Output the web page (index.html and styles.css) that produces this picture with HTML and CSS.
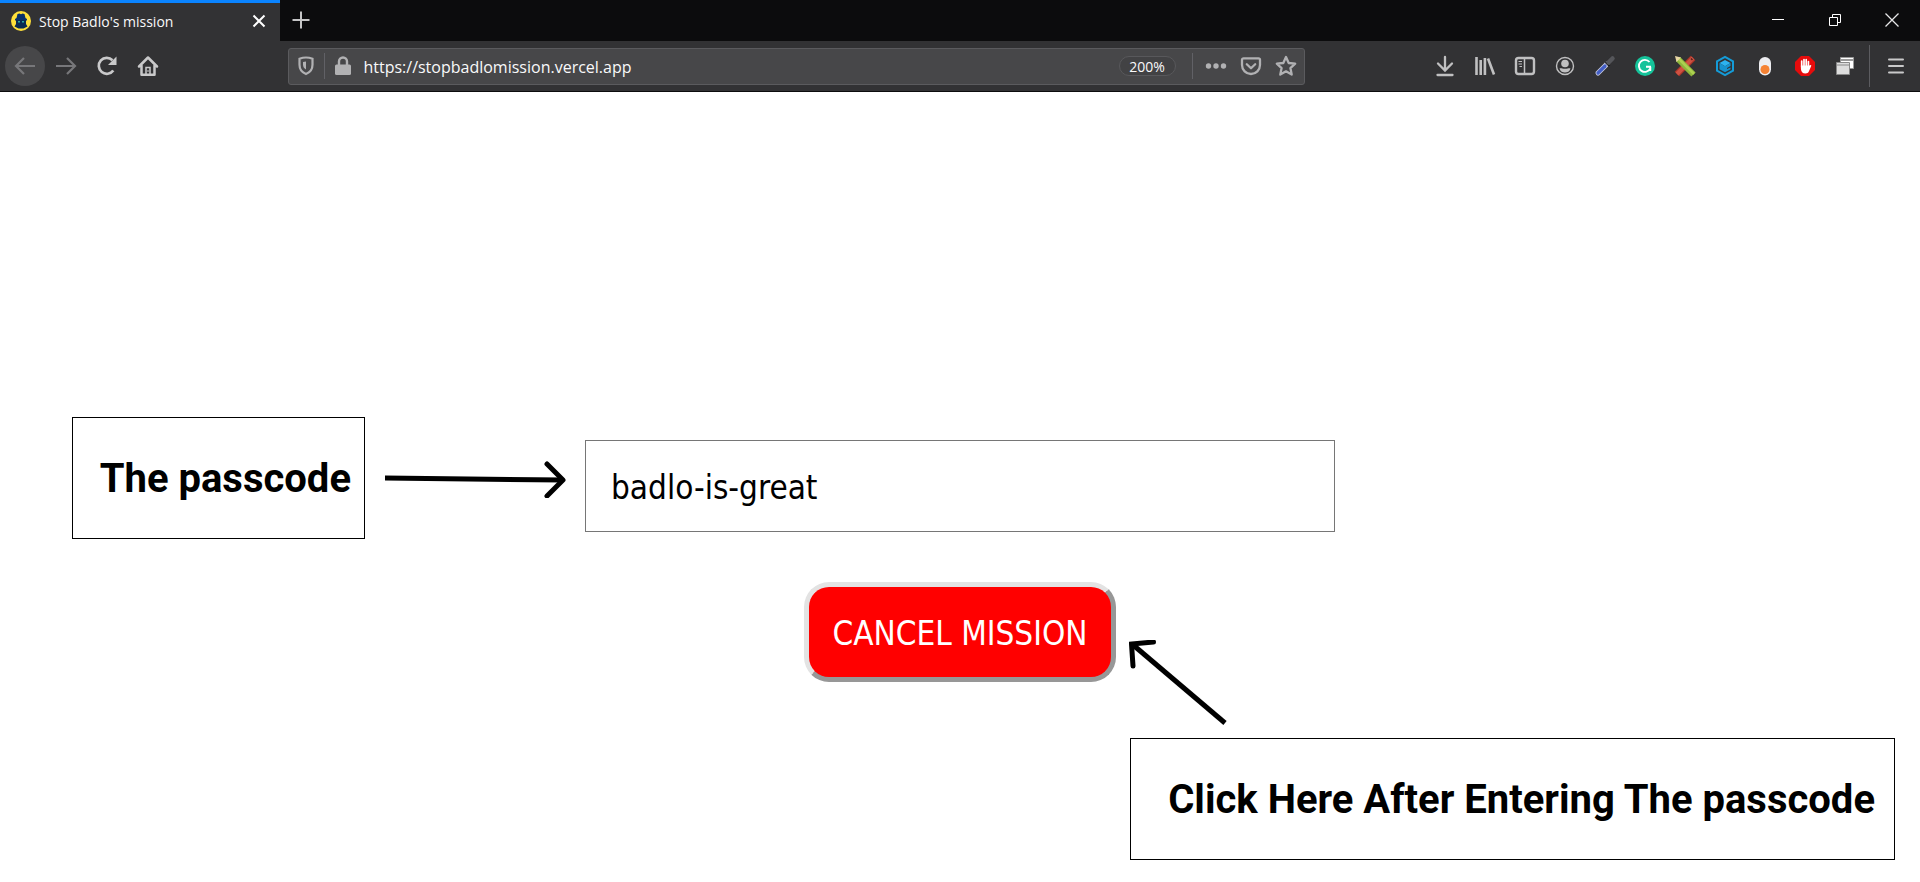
FILE: index.html
```html
<!DOCTYPE html>
<html lang="en">
<head>
<meta charset="utf-8">
<title>Stop Badlo's mission</title>
<link rel="stylesheet" href="styles.css">
</head>
<body>
<header class="browser">
  <div class="tabbar">
    <div class="tab">
      <svg class="favicon" viewBox="0 0 20 20" aria-hidden="true"><circle cx="10" cy="10" r="10" fill="#ffe03a"/><path d="M6.500 3 8.500 2.500 10 3.200 11.500 2.500 13.500 3 14.500 7 16 8v1.500H4V8l1.500-1z" fill="#08306b"/><path d="M5 9h10v4l1.500 2.500-2 1-2 1h-5l-4-2L5 13z" fill="#0b2a52"/><path d="M7 10h2v1.500H7zM11 10h2v1.500h-2z" fill="#2fa7a0"/></svg>
      <span class="tab-title">Stop Badlo's mission</span>
      <button class="tab-close" aria-label="Close tab"><svg viewBox="0 0 24 24"><path d="M6.500 6.500l11 11M17.500 6.500l-11 11" stroke="#fff" stroke-width="2"/></svg></button>
    </div>
    <button class="new-tab" aria-label="New tab"><svg viewBox="0 0 24 24"><path d="M12 3.500v17M3.500 12h17" stroke="#c6c6c6" stroke-width="2"/></svg></button>
    <div class="window-controls">
      <button aria-label="Minimize"><svg viewBox="0 0 24 24"><path d="M6 11.500h12" stroke="#fff"/></svg></button>
      <button aria-label="Restore"><svg viewBox="0 0 24 24"><path d="M6.500 9.500h8v8h-8zM9.500 9V6.500h8v8H15" stroke="#fff"/></svg></button>
      <button aria-label="Close window"><svg viewBox="0 0 24 24"><path d="M5.500 5.500l13 13M18.500 5.500l-13 13" stroke="#e8e8e8" stroke-width="1.300"/></svg></button>
    </div>
  </div>
  <nav class="toolbar" aria-label="Browser toolbar">
    <div class="nav-buttons">
      <button class="tool back" aria-label="Back"><svg viewBox="0 0 24 24"><path d="M22 12H3.500M11 4l-8 8 8 8" stroke="#77777a" stroke-width="2.200"/></svg></button>
      <button class="tool" aria-label="Forward"><svg viewBox="0 0 24 24"><path d="M2 12h18.500M13 4l8 8-8 8" stroke="#77777a" stroke-width="2.200"/></svg></button>
      <button class="tool" aria-label="Reload"><svg viewBox="0 0 24 24"><path d="M18.300 16.500A8 8 0 1 1 17.500 6.200" stroke="#c9c9ca" stroke-width="2.700"/><path d="M21.500 2.500v8.500H13z" fill="#c9c9ca"/></svg></button>
      <button class="tool" aria-label="Home"><svg viewBox="0 0 24 24"><path d="M3 12.500 12 3.500l9 9M5.500 11.500v9.300h13v-9.300" stroke="#c9c9ca" stroke-width="2.500" stroke-linejoin="round" stroke-linecap="round"/><path d="M10 20.500v-7h4v7" stroke="#c9c9ca" stroke-width="1.500"/><path d="M12 16v2" stroke="#c9c9ca"/></svg></button>
    </div>
    <div class="spacer"></div>
    <div class="urlbar">
      <svg class="icon" viewBox="0 0 24 24"><path d="M12 3.500c2.500 0 4.500.500 6.500 1.300v6c0 4.500-2.500 7.700-6.500 9.200-4-1.500-6.500-4.700-6.500-9.200v-6C7.500 4 9.500 3.500 12 3.500z" stroke="#b1b1b3" stroke-width="2.200"/><path d="M12 7.500v8c-2-1-3-3-3-5V8z" fill="#b1b1b3"/></svg>
      <span class="divider"></span>
      <svg class="icon" viewBox="0 0 24 24"><path d="M8 11V7.500a4 4 0 0 1 8 0V11" stroke="#b1b1b3" stroke-width="2.400"/><rect x="4" y="10.500" width="16" height="10.500" rx="1.500" fill="#b1b1b3"/></svg>
      <input class="url" type="text" aria-label="Address" value="https://stopbadlomission.vercel.app">
      <button class="zoom">200%</button>
      <span class="divider"></span>
      <button class="page-action" aria-label="Page actions"><svg viewBox="0 0 24 24"><g fill="#b1b1b3"><circle cx="4.500" cy="12" r="2.700"/><circle cx="12" cy="12" r="2.700"/><circle cx="19.500" cy="12" r="2.700"/></g></svg></button>
      <button class="page-action" aria-label="Save to Pocket"><svg viewBox="0 0 24 24"><path d="M4.500 4.300h15a1.500 1.500 0 0 1 1.500 1.500V11a9 9 0 0 1-18 0V5.800a1.500 1.500 0 0 1 1.500-1.500z" stroke="#b1b1b3" stroke-width="2.300"/><path d="M7.800 10.200 12 14.300l4.200-4.100" stroke="#b1b1b3" stroke-width="2.300" stroke-linecap="round" stroke-linejoin="round"/></svg></button>
      <button class="page-action" aria-label="Bookmark"><svg viewBox="0 0 24 24"><path d="M12 3l2.700 6 6.500.700-4.800 4.400 1.300 6.500L12 17.300l-5.700 3.300 1.300-6.500-4.800-4.400 6.500-.700z" stroke="#b1b1b3" stroke-width="2.300" stroke-linejoin="round"/></svg></button>
    </div>
    <div class="spacer"></div>
    <div class="extensions">
      <button class="tool" aria-label="Downloads"><svg viewBox="0 0 24 24"><path d="M12 3v13M5 9.500l7 7 7-7M4.500 21h15" stroke="#c0c0c1" stroke-width="2.300" stroke-linecap="round"/></svg></button>
      <button class="tool" aria-label="Library"><svg viewBox="0 0 24 24"><path d="M3.500 3v18M7.700 6v15M11.900 4v17M15 4.500l6 16" stroke="#c0c0c1" stroke-width="2.600"/></svg></button>
      <button class="tool" aria-label="Sidebars"><svg viewBox="0 0 24 24"><rect x="3" y="4" width="18" height="16" rx="2.500" stroke="#c0c0c1" stroke-width="2.400"/><path d="M11.500 4v16" stroke="#c0c0c1" stroke-width="1.500"/><path d="M5.500 7.500H9M5.500 10H9M6.500 12.500H9" stroke="#c0c0c1" stroke-width="1.200"/></svg></button>
      <button class="tool" aria-label="Account"><svg viewBox="0 0 24 24"><circle cx="12" cy="12" r="8.500" stroke="#c0c0c1" stroke-width="1.400"/><circle cx="12" cy="9.500" r="3.800" fill="#c0c0c1"/><path d="M6.500 14.500c1.500-.700 2.500.300 5.500.300s4-1 5.500-.300c-1 3-3 4-5.500 4s-4.500-1-5.500-4z" fill="#c0c0c1"/></svg></button>
      <button class="tool" aria-label="Color picker"><svg viewBox="0 0 24 24"><path d="M5 19 14 10" stroke="#c9cce0" stroke-width="5" stroke-linecap="round"/><path d="M5 19l7-7" stroke="#425dc4" stroke-width="3.200" stroke-linecap="round"/><path d="M12.500 8l4 4" stroke="#17171a" stroke-width="2"/><path d="M15.500 8.500l4-4" stroke="#55565a" stroke-width="4.500" stroke-linecap="round"/></svg></button>
      <button class="tool" aria-label="Grammarly"><svg viewBox="0 0 24 24"><circle cx="12" cy="12" r="10" fill="#15c39a"/><path d="M16.500 8A6 6 0 1 0 17.300 14.500M18 12.800h-5M17.300 12.800v4.200" stroke="#fff" stroke-width="1.900"/></svg></button>
      <button class="tool" aria-label="Editor tools"><svg viewBox="0 0 24 24"><path d="M4 20l16-16" stroke="#a83427" stroke-width="6.500"/><path d="M4 20l16-16" stroke="#cf5142" stroke-width="4"/><path d="M18 4.500l1.500 1.500" stroke="#55201a" stroke-width="1.500"/><path d="M5 5l15.500 15.500" stroke="#8db63b" stroke-width="6"/><path d="M5.500 4.500L21 20" stroke="#add051" stroke-width="2.500"/><path d="M2 2l6 1.500L3.500 8z" fill="#e9d7a4"/></svg></button>
      <button class="tool" aria-label="Cube"><svg viewBox="0 0 24 24"><path d="M12 2.800l8 4.600v9.200l-8 4.600-8-4.600V7.400z" stroke="#149bd7" stroke-width="2"/><path d="M12 6l5.500 3.100L12 12.200 6.500 9.100z" fill="#2cb3ef"/><path d="M6.500 9.100l5.500 3.100 5.500-3.100v3L14 14v1l3.500-1.500v1.700L12 18.300l-5.500-3.100z" fill="#1593cf"/></svg></button>
      <button class="tool" aria-label="Toggle"><svg viewBox="0 0 24 24"><rect x="6" y="3" width="12" height="18.500" rx="6" fill="#ededf0"/><circle cx="12" cy="15.500" r="4.500" fill="#f58233"/></svg></button>
      <button class="tool" aria-label="Ad blocker"><svg viewBox="0 0 24 24"><path d="M8 2h8l6 6v8l-6 6H8l-6-6V8z" fill="#e60c0c"/><path d="M8.700 13V7M11 12V5.500M13.200 12V5.500M15.400 13V7.500" stroke="#fff" stroke-width="1.700" stroke-linecap="round"/><path d="M7.900 11.500h8.300l1.500-.500c1 0 .500 1 .200 1.800l-2.200 5c-.500 1-1.500 1.700-3.200 1.700-3 0-4.600-2-4.600-5z" fill="#fff"/></svg></button>
      <button class="tool" aria-label="Windows"><svg viewBox="0 0 24 24"><path d="M7.500 3.500h13v11h-13z" fill="#fff" stroke="#999"/><path d="M8 6h12" stroke="#777" stroke-width="1.500"/><path d="M3.500 8.500h13v12h-13z" fill="#ddd" stroke="#888"/><path d="M4 11h12" stroke="#888"/></svg></button>
      <span class="toolbar-divider"></span>
      <button class="tool" aria-label="Open menu"><svg viewBox="0 0 24 24"><path d="M5 5.500h14M5 12h14M5 18.500h14" stroke="#c9c9ca" stroke-width="2" stroke-linecap="round"/></svg></button>
    </div>
  </nav>
</header>
<main class="page">
  <div class="entry-row">
    <div class="hint">
      <p class="callout">The passcode</p>
      <svg class="arrow-right" viewBox="0 0 181 40" aria-hidden="true"><path d="M0 20l178 2" stroke="#000" stroke-width="5"/><path d="M162 6l16 16-16 16" stroke="#000" stroke-width="5" stroke-linecap="round" stroke-linejoin="round"/></svg>
    </div>
    <input class="passcode" type="text" aria-label="Passcode" value="badlo-is-great">
  </div>
  <div class="action-row">
    <button class="cancel">CANCEL MISSION</button>
    <svg class="arrow-up" viewBox="0 0 100 87" aria-hidden="true"><path d="M96 83L3 4" stroke="#000" stroke-width="5"/><path d="M24.500 2L2.500 4l1.500 22" stroke="#000" stroke-width="5" stroke-linecap="round"/></svg>
  </div>
  <p class="callout callout-click">Click Here After Entering The passcode</p>
</main>
</body>
</html>
```
FILE: styles.css
```css
* { box-sizing: border-box; }

body {
  margin: 0;
  min-height: 100vh;
  display: flex;
  flex-direction: column;
  background: #fff;
  font-family: "Open Sans", "Noto Sans", sans-serif;
}

button, input { font: inherit; color: inherit; border: 0; padding: 0; background: none; }
svg { display: block; fill: none; }
p { margin: 0; }

.browser { color: #f9f9fa; }
.browser svg { width: 24px; height: 24px; flex: none; }
.browser button { display: flex; align-items: center; justify-content: center; }

.tabbar { display: flex; height: 41px; background: #0c0c0d; }
.tab {
  display: flex;
  align-items: center;
  width: 280px;
  padding: 0 9px 2px 11px;
  border-top: 3px solid #0a84ff;
  background: #323234;
  font-size: 14px;
}
.browser .favicon { width: 20px; height: 20px; }
.tab-title { flex: 1; padding-left: 8px; }
.new-tab { width: 42px; padding-bottom: 1px; }
.window-controls { display: flex; margin-left: auto; }
.window-controls button { width: 57px; padding-bottom: 1px; }

.toolbar {
  display: flex;
  align-items: center;
  height: 51px;
  padding: 0 4px 0 5px;
  border-bottom: 1px solid #0c0c0d;
  background: #323234;
}
.nav-buttons, .extensions { display: flex; align-items: center; }
.nav-buttons { gap: 1px; }
.tool { width: 40px; height: 40px; }
.back { border-radius: 50%; background: #474749; }
.spacer { flex: 121; }
.urlbar {
  flex: 1014;
  display: flex;
  align-items: center;
  height: 37px;
  padding: 0 0 0 5px;
  border: 1px solid #5b5b5e;
  border-radius: 3px;
  background: #474749;
}
.divider { width: 1px; height: 26px; margin: 0 6px; background: #616166; }
.url { flex: 1; min-width: 0; padding: 2px 0 0 8px; font-size: 16px; }
.zoom {
  width: 57px;
  height: 20px;
  margin-right: 10px;
  border: 1px solid #58585b;
  border-radius: 10px;
  background: #424244;
  font-size: 14px;
}
.page-action { width: 35px; height: 35px; }
.toolbar-divider { width: 1px; height: 42px; margin: 0 6px 0 4px; background: #5c5c60; }

.page {
  flex: 1;
  display: flex;
  flex-direction: column;
  justify-content: flex-end;
  padding-bottom: 22px;
}
.callout {
  border: 1px solid #000;
  padding: 37px 13px 35px 27px;
  color: #000;
  font: bold 40px/48px Roboto, sans-serif;
  white-space: nowrap;
}
.entry-row { display: grid; grid-template-columns: 1fr 750px 1fr; align-items: start; }
.hint { display: flex; align-items: center; justify-content: flex-end; gap: 20px; padding-right: 19px; }
.arrow-right { width: 181px; height: 40px; }
.passcode, .cancel { font: 33px "DejaVu Sans Condensed", "Noto Sans", sans-serif; }
.passcode {
  height: 92px;
  margin-top: 23px;
  padding: 2px 25px 0;
  border: 1px solid #767676;
  color: #000;
}
.action-row {
  display: grid;
  grid-template-columns: 1fr auto 1fr;
  align-items: start;
  margin-top: 43px;
}
.cancel {
  grid-column: 2;
  min-width: 312px;
  height: 100px;
  padding: 2px 20px 0;
  border: 5px solid;
  border-color: #e3e3e3 #979797 #979797 #e3e3e3;
  border-radius: 25px;
  background: #f00;
  color: #fff;
}
.arrow-up { width: 100px; height: 87px; margin: 58px 0 0 13px; }
.callout-click { align-self: flex-end; margin: 11px 25px 0 0; padding-left: 37px; padding-right: 19px; }
```
